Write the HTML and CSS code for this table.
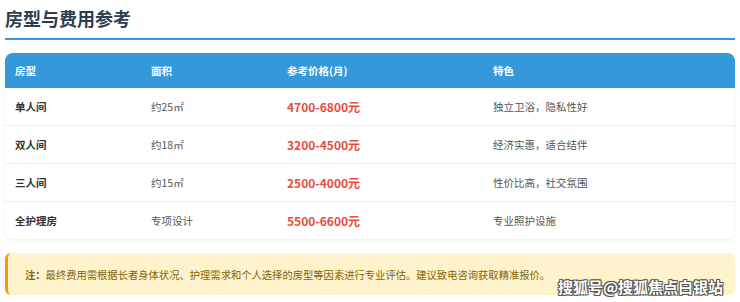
FILE: index.html
```html
<!DOCTYPE html>
<html lang="zh">
<head>
<meta charset="utf-8">
<link rel="stylesheet" href="styles.css">
</head>
<body>
<div class="page">
  <h2 class="title">房型与费用参考</h2>
  <table class="fees">
    <thead>
      <tr><th class="c1">房型</th><th class="c2">面积</th><th class="c3">参考价格(月)</th><th class="c4">特色</th></tr>
    </thead>
    <tbody>
      <tr><td class="name">单人间</td><td class="area">约25㎡</td><td class="price">4700-6800元</td><td class="feat">独立卫浴，隐私性好</td></tr>
      <tr><td class="name">双人间</td><td class="area">约18㎡</td><td class="price">3200-4500元</td><td class="feat">经济实惠，适合结伴</td></tr>
      <tr><td class="name">三人间</td><td class="area">约15㎡</td><td class="price">2500-4000元</td><td class="feat">性价比高，社交氛围</td></tr>
      <tr><td class="name">全护理房</td><td class="area">专项设计</td><td class="price">5500-6600元</td><td class="feat">专业照护设施</td></tr>
    </tbody>
  </table>
  <div class="note"><strong>注：</strong>最终费用需根据长者身体状况、护理需求和个人选择的房型等因素进行专业评估。建议致电咨询获取精准报价。</div>
  <div class="watermark">搜狐号@搜狐焦点白银站</div>
</div>
</body>
</html>
```
FILE: styles.css
```css
* { box-sizing: border-box; }
html, body { margin: 0; padding: 0; background: #fff; }
body {
  font-family: "Microsoft YaHei", "Noto Sans CJK SC", "Noto Sans", sans-serif;
  color: #333;
}
.page {
  position: relative;
  width: 740px;
  height: 302px;
  padding: 0 5px;
  overflow: hidden;
}
.title {
  margin: 0;
  padding-top: 5px;
  padding-bottom: 7px;
  font-size: 18px;
  line-height: 26px;
  font-weight: bold;
  color: #2c3e50;
  border-bottom: 2px solid #3a97dc;
}
.fees {
  margin-top: 13px;
  width: 730px;
  border-collapse: separate;
  border-spacing: 0;
  table-layout: fixed;
  border-radius: 8px;
  box-shadow: 0 1px 3px rgba(0,0,0,0.08);
  font-size: 10.5px;
}
.fees th {
  background: #3498db;
  color: #fff;
  font-weight: bold;
  font-size: 10.5px;
  text-align: left;
  height: 35px;
  padding: 0 10px;
}
.fees th.c1 { width: 136px; border-top-left-radius: 8px; }
.fees th.c2 { width: 136px; }
.fees th.c3 { width: 206px; }
.fees th.c4 { border-top-right-radius: 8px; }
.fees td {
  height: 38px;
  padding: 0 10px;
  border-bottom: 1px solid #eeeeee;
  vertical-align: middle;
}
.fees tbody tr:last-child td { border-bottom: none; height: 37px; }
.name { font-weight: bold; color: #333; }
.area { color: #555; }
.price { color: #e74c3c; font-weight: bold; font-size: 12px; }
.feat { color: #555; }
.note {
  margin-top: 14px;
  height: 42px;
  display: flex;
  align-items: center;
  padding-left: 17px;
  background: #fff3cd;
  border-left: 3px solid #f39c12;
  border-radius: 6px;
  font-size: 10.3px;
  color: #856404;
}
.note strong { font-weight: bold; }
.watermark {
  position: absolute;
  left: 558px;
  top: 277px;
  font-size: 15px;
  line-height: 20px;
  font-weight: bold;
  color: #fff;
  text-shadow: 1px 1px 0 #555, -1px -1px 0 #555, 1px -1px 0 #555, -1px 1px 0 #555, 0 0 2px #333;
}
```
